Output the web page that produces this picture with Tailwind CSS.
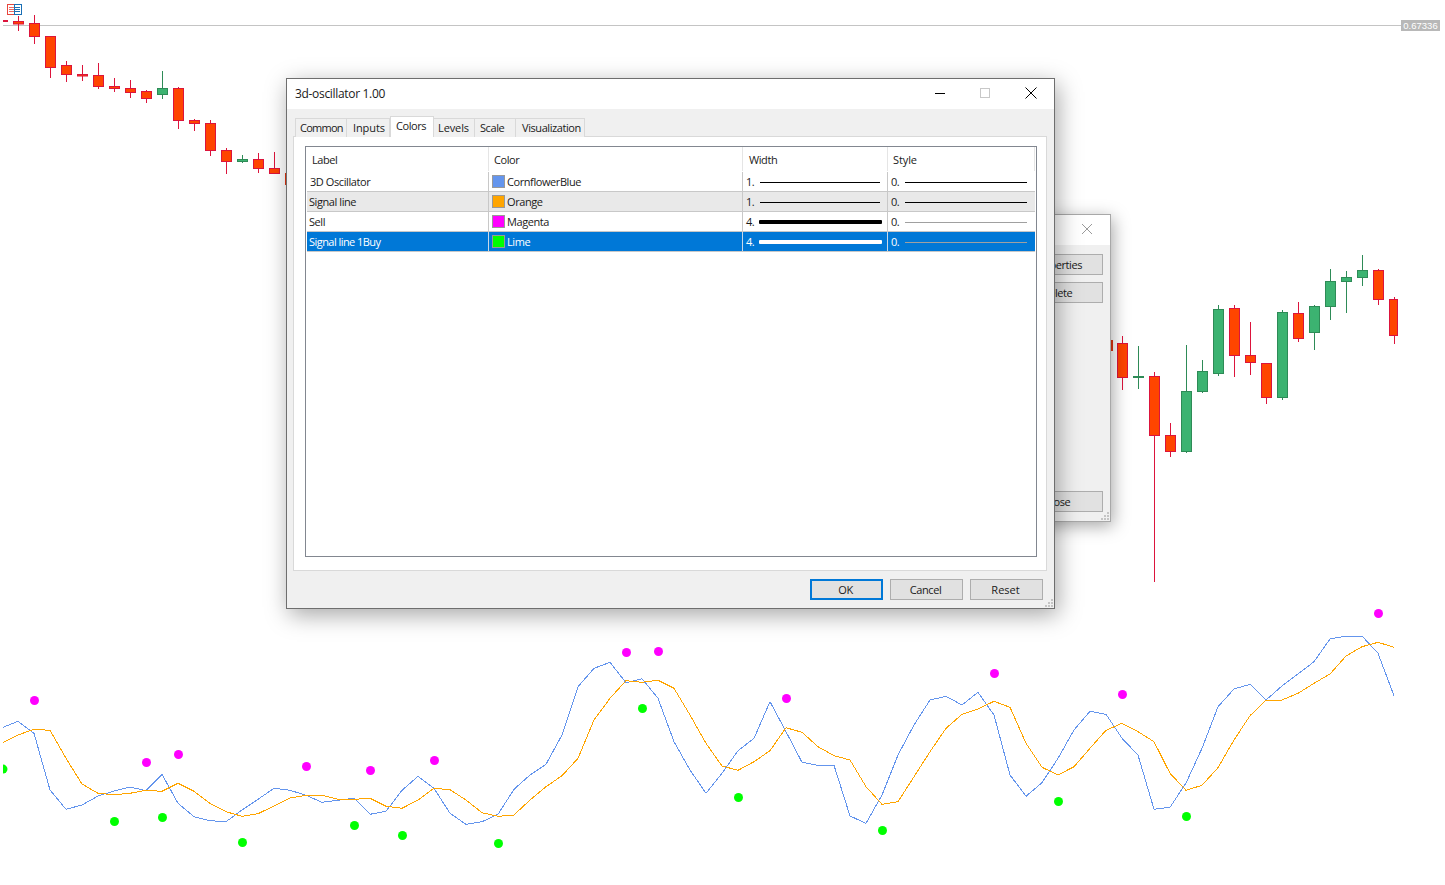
<!DOCTYPE html>
<html>
<head>
<meta charset="utf-8">
<script src="https://cdn.jsdelivr.net/npm/@tailwindcss/browser@4"></script>
</head>
<body class="bg-white">
<div class="relative w-[1445px] h-[885px] overflow-hidden bg-white font-['Open_Sans','Noto_Sans',sans-serif] text-[11px] tracking-[-0.42px] text-[#1a1a1a]">

  <!-- chart canvas -->
  <svg class="absolute left-0 top-0" width="1445" height="885" viewBox="0 0 1445 885">
    <rect x="3" y="25" width="1398" height="1" fill="#c4c4c4"/>
    <path fill="none" stroke="#dc143c" stroke-width="1" d="M18.5 16V31M34.5 15V44M50.5 36V78M66.5 61V82M82.5 65V81M98.5 63V89M114.5 78V92M130.5 80V98M146.5 90V103M178.5 87V129M194.5 119V131M210.5 120V156M226.5 148V174M258.5 153V173M274.5 152V174M1122.5 336V390M1154.5 372V582M1170.5 423V457M1234.5 305V377M1250.5 322V375M1266.5 363V404M1298.5 302V342M1378.5 269V305M1394.5 297V344"/>
    <path fill="none" stroke="#2e8b57" stroke-width="1" d="M162.5 71V99M242.5 155V163M1138.5 346V389M1186.5 345V453M1202.5 360V393M1218.5 305V376M1282.5 310V400M1314.5 305V350M1330.5 269V320M1346.5 271V313M1362.5 255V286"/>
    <rect x="3" y="20" width="5" height="2" fill="#dc143c"/>
    <rect x="285" y="173" width="2" height="12" fill="#e03510"/>
    <rect x="1109" y="340" width="4" height="11" fill="#e03510"/>
    <g fill="#ff4500" stroke="#dc143c" stroke-width="1">
      <rect x="13.5" y="21.5" width="10" height="2.5"/>
      <rect x="29.5" y="23.5" width="10" height="13"/>
      <rect x="45.5" y="36.5" width="10" height="31"/>
      <rect x="61.5" y="65.5" width="10" height="9"/>
      <rect x="77.5" y="74.5" width="10" height="1.5"/>
      <rect x="93.5" y="75.5" width="10" height="11"/>
      <rect x="109.5" y="86.5" width="10" height="2"/>
      <rect x="125.5" y="88.5" width="10" height="4"/>
      <rect x="141.5" y="91.5" width="10" height="7"/>
      <rect x="173.5" y="88.5" width="10" height="32"/>
      <rect x="189.5" y="120.5" width="10" height="3"/>
      <rect x="205.5" y="123.5" width="10" height="27"/>
      <rect x="221.5" y="150.5" width="10" height="11"/>
      <rect x="253.5" y="159.5" width="10" height="9"/>
      <rect x="269.5" y="168.5" width="10" height="5"/>
      <rect x="1117.5" y="343.5" width="10" height="34"/>
      <rect x="1149.5" y="376.5" width="10" height="59"/>
      <rect x="1165.5" y="435.5" width="10" height="16"/>
      <rect x="1229.5" y="308.5" width="10" height="47"/>
      <rect x="1245.5" y="355.5" width="10" height="7"/>
      <rect x="1261.5" y="363.5" width="10" height="34"/>
      <rect x="1293.5" y="313.5" width="10" height="25"/>
      <rect x="1373.5" y="270.5" width="10" height="29"/>
      <rect x="1389.5" y="299.5" width="8" height="36"/>
    </g>
    <g fill="#3cb371" stroke="#2e8b57" stroke-width="1">
      <rect x="157.5" y="88.5" width="10" height="6"/>
      <rect x="237.5" y="159.5" width="10" height="2"/>
      <rect x="1133.5" y="376.5" width="10" height="1"/>
      <rect x="1181.5" y="391.5" width="10" height="60"/>
      <rect x="1197.5" y="371.5" width="10" height="20"/>
      <rect x="1213.5" y="309.5" width="10" height="64"/>
      <rect x="1277.5" y="312.5" width="10" height="85"/>
      <rect x="1309.5" y="306.5" width="10" height="26"/>
      <rect x="1325.5" y="281.5" width="10" height="25"/>
      <rect x="1341.5" y="277.5" width="10" height="4"/>
      <rect x="1357.5" y="270.5" width="10" height="7"/>
    </g>

    <polyline fill="none" stroke="#6495ed" stroke-width="1" shape-rendering="crispEdges" points="3,727.3 18,721.3 34,733.3 50,790 66,809.3 82,805 98,796 114,791 130,787 146,790.7 162,774.3 178,803.3 194,816.7 210,820.7 226,821.7 242,810 258,799.3 274,788.3 290,790.3 306,795.3 322,802.3 338,800.3 354,798.3 370,814.3 386,811.3 402,790.3 418,776.3 434,788.3 450,813.3 466,824.3 482,821.7 498,814.3 514,789.3 530,775 546,764.3 562,735 578,686.7 594,668.3 610,662.3 626,682.7 642,678.7 658,698.3 674,741.7 690,770 706,793.3 722,773.3 738,750.7 754,738.3 770,701.7 786,731.7 802,762.3 818,765.3 834,765.3 850,816 866,823.3 882,795 898,755 914,725 930,700 946,696.3 962,705 978,692.3 994,715 1010,775 1026,796.3 1042,782.7 1058,758.3 1074,730 1090,711.3 1106,714.3 1122,738.3 1138,755 1154,809.3 1170,807.3 1186,783 1202,748.3 1218,706.7 1234,689 1250,684.3 1266,700 1282,686 1298,674 1314,661.7 1330,639 1346,636 1362,636 1378,653.3 1394,695.7"/>
    <polyline fill="none" stroke="#ffa500" stroke-width="1" shape-rendering="crispEdges" points="3,742.7 18,735 34,729.3 50,730.3 66,758.3 82,784 98,793.3 114,794.7 130,793.3 146,790.3 162,791.3 178,783.3 194,791.3 210,803.3 226,811.7 242,816.3 258,813.7 274,806 290,798 306,795.3 322,795.3 338,799.3 354,799.3 370,798.3 386,806.3 402,808.3 418,800 434,788.3 450,789.7 466,800 482,812.7 498,816.3 514,815 530,800 546,786.7 562,775.7 578,758.3 594,720 610,698.3 626,680.7 642,682.3 658,680.3 674,688.3 690,715 706,743.3 722,766 738,770.3 754,761.7 770,750.7 786,727.7 802,732.3 818,746.7 834,755.7 850,760 866,786.7 882,804.3 898,801.7 914,776.7 930,751.7 946,728.3 962,714.3 978,709 994,701.3 1010,707.3 1026,743.3 1042,767.3 1058,775 1074,766.7 1090,748.3 1106,730.3 1122,723.3 1138,731.7 1154,741.7 1170,773.3 1186,790.3 1202,785.3 1218,767.7 1234,740 1250,715.7 1266,700 1282,700 1298,693.3 1314,683.3 1330,674 1346,656 1362,646.7 1378,642.3 1394,647.3"/>

    <g fill="#ff00ff">
      <circle cx="34.5" cy="700.5" r="4.5"/><circle cx="146.5" cy="762.5" r="4.5"/><circle cx="178.5" cy="754.5" r="4.5"/><circle cx="306.5" cy="766.5" r="4.5"/><circle cx="370.5" cy="770.5" r="4.5"/><circle cx="434.5" cy="760.5" r="4.5"/><circle cx="626.5" cy="652.5" r="4.5"/><circle cx="658.5" cy="651.5" r="4.5"/><circle cx="786.5" cy="698.5" r="4.5"/><circle cx="994.5" cy="673.5" r="4.5"/><circle cx="1122.5" cy="694.5" r="4.5"/><circle cx="1378.5" cy="613.5" r="4.5"/>
    </g>
    <g fill="#00ff00">
      <path d="M3 764.6a4.5 4.5 0 0 1 0 9z"/>
      <circle cx="114.5" cy="821.5" r="4.5"/><circle cx="162.5" cy="817.5" r="4.5"/><circle cx="242.5" cy="842.5" r="4.5"/><circle cx="354.5" cy="825.5" r="4.5"/><circle cx="402.5" cy="835.5" r="4.5"/><circle cx="498.5" cy="843.5" r="4.5"/><circle cx="642.5" cy="708.5" r="4.5"/><circle cx="738.5" cy="797.5" r="4.5"/><circle cx="882.5" cy="830.5" r="4.5"/><circle cx="1058.5" cy="801.5" r="4.5"/><circle cx="1186.5" cy="816.5" r="4.5"/>
    </g>

    <rect x="7.5" y="4.5" width="7" height="10" fill="#fff" stroke="#e8453c"/>
    <rect x="14.5" y="4.5" width="7" height="10" fill="#fff" stroke="#1a6fb5"/>
    <path stroke="#e8453c" d="M9 7.5h5M9 9.5h5M9 11.5h5" fill="none" opacity=".8"/>
    <path stroke="#1a6fb5" d="M15 7.5h5M15 9.5h5M15 11.5h5" fill="none"/>
  </svg>

  <!-- price label -->
  <div class="absolute left-[1401px] top-[20px] w-[39px] h-[11px] bg-[#b8b8b8] text-white text-[9.5px] leading-[11px] tracking-[0px] text-center font-['Liberation_Sans',sans-serif]">0.67336</div>

  <!-- back window -->
  <div class="absolute left-[900px] top-[214px] w-[211px] h-[308px] border border-[#a8a8a8] bg-[#f0f0f0] flex flex-col shadow-[2px_4px_16px_rgba(0,0,0,0.35)]">
    <div class="h-[30px] bg-white flex items-center justify-end pr-[17px] pb-[2px] shrink-0">
      <svg width="12" height="12" viewBox="0 0 12 12"><path d="M1 1l10 10M11 1L1 11" stroke="#9a9a9a" fill="none"/></svg>
    </div>
    <div class="flex-1 flex flex-col items-end pr-[7px] pt-[9px] pb-[9px]">
      <div class="w-[94px] h-[21px] border border-[#adadad] bg-[#e1e1e1] flex items-center justify-center pt-[1px] pl-[3px]">Properties</div>
      <div class="w-[94px] h-[21px] mt-[7px] border border-[#adadad] bg-[#e1e1e1] flex items-center justify-center pt-[1px] pl-[2px]">Delete</div>
      <div class="w-[94px] h-[21px] mt-auto border border-[#adadad] bg-[#e1e1e1] flex items-center justify-center pt-[1px] pl-[3px]">Close</div>
    </div>
    <svg class="absolute right-[1px] bottom-[1px]" width="8" height="8" viewBox="0 0 8 8" fill="#c4c4c4"><rect x="6" y="0" width="2" height="2"/><rect x="3" y="3" width="2" height="2"/><rect x="6" y="3" width="2" height="2"/><rect x="0" y="6" width="2" height="2"/><rect x="3" y="6" width="2" height="2"/><rect x="6" y="6" width="2" height="2"/></svg>
  </div>

  <!-- main dialog -->
  <div class="absolute left-[286px] top-[78px] w-[769px] h-[531px] border border-[#6e6e6e] bg-[#f0f0f0] flex flex-col shadow-[3px_6px_22px_rgba(0,0,0,0.35)]">
    <div class="h-[30px] shrink-0 bg-white flex items-center justify-between pl-[8px] pr-[17px]">
      <span class="text-[12px] tracking-[-0.32px]">3d-oscillator 1.00</span>
      <div class="flex items-center pb-[2px]">
        <svg class="mr-[33px]" width="12" height="12" viewBox="0 0 12 12"><path d="M1 6.5h10" stroke="#000" fill="none"/></svg>
        <svg class="mr-[34px]" width="12" height="12" viewBox="0 0 12 12"><rect x="1.5" y="1.5" width="9" height="9" stroke="#c8c8c8" fill="none"/></svg>
        <svg width="12" height="12" viewBox="0 0 12 12"><path d="M.5.5l11 11M11.5.5l-11 11" stroke="#000" fill="none"/></svg>
      </div>
    </div>

    <div class="flex-1 flex flex-col pl-[6px] pr-[7px] pt-[7px] min-h-0">
      <div class="flex items-end h-[21px] pl-[2px] shrink-0 relative z-10 -mb-[1px]">
        <div class="w-[52px] h-[19px] border border-[#d9d9d9] border-b-0 bg-[#f0f0f0] flex items-center pl-[4px] pt-[1px] tracking-[-0.75px]">Common</div>
        <div class="w-[43px] h-[19px] border-t border-r border-[#d9d9d9] bg-[#f0f0f0] flex items-center pl-[6px] pt-[1px] tracking-[-0.1px]">Inputs</div>
        <div class="w-[44px] h-[21px] border border-[#d9d9d9] border-b-0 bg-white flex items-center pb-[1px] pl-[5px]">Colors</div>
        <div class="w-[41px] h-[19px] border-t border-r border-[#d9d9d9] bg-[#f0f0f0] flex items-center pl-[4px] pt-[1px] tracking-[-0.1px]">Levels</div>
        <div class="w-[41px] h-[19px] border-t border-r border-[#d9d9d9] bg-[#f0f0f0] flex items-center pl-[5px] pt-[1px]">Scale</div>
        <div class="w-[69px] h-[19px] border-t border-r border-[#d9d9d9] bg-[#f0f0f0] flex items-center pl-[6px] pt-[1px]">Visualization</div>
      </div>
      <div class="h-[435px] shrink-0 border border-[#d9d9d9] bg-white pl-[11px] pr-[9px] pt-[9px] pb-[13px]">
        <div class="h-full border border-[#828790] bg-white">
          <div class="grid grid-cols-[183px_254px_145px_147px] h-[25px] pb-[1px]">
            <div class="border-r border-[#e5e5e5] pl-[6px] flex items-center pt-[3px]">Label</div>
            <div class="border-r border-[#e5e5e5] pl-[5px] flex items-center pt-[3px]">Color</div>
            <div class="border-r border-[#e5e5e5] pl-[6px] flex items-center pt-[3px]">Width</div>
            <div class="border-r border-[#e5e5e5] pl-[5px] flex items-center pt-[3px] tracking-[-0.1px]">Style</div>
          </div>

          <div class="grid grid-cols-[182px_254px_145px_147px] ml-[1px] w-[728px] h-[20px] border-b border-[#c8c8c8]">
            <div class="border-r border-[#c8c8c8] pl-[3px] flex items-center pt-[1px]">3D Oscillator</div>
            <div class="border-r border-[#c8c8c8] pl-[3px] flex items-center pt-[1px]"><span class="w-[13px] h-[13px] -mt-[1px] border border-[#999] bg-[#6495ed] mr-[2px]"></span>CornflowerBlue</div>
            <div class="border-r border-[#c8c8c8] pl-[3px] flex items-center pt-[1px]"><span class="w-[14px]">1.</span><span class="w-[120px] h-[1px] bg-black"></span></div>
            <div class="pl-[3px] flex items-center pt-[1px]"><span class="w-[14px]">0.</span><span class="w-[122px] h-[1px] bg-black"></span></div>
          </div>
          <div class="grid grid-cols-[182px_254px_145px_147px] ml-[1px] w-[728px] h-[20px] border-b border-[#c8c8c8] bg-[#e9e9e9]">
            <div class="border-r border-[#c8c8c8] pl-[2px] flex items-center pt-[1px]">Signal line</div>
            <div class="border-r border-[#c8c8c8] pl-[3px] flex items-center pt-[1px]"><span class="w-[13px] h-[13px] -mt-[1px] border border-[#999] bg-[#ffa500] mr-[2px]"></span>Orange</div>
            <div class="border-r border-[#c8c8c8] pl-[3px] flex items-center pt-[1px]"><span class="w-[14px]">1.</span><span class="w-[120px] h-[1px] bg-black"></span></div>
            <div class="pl-[3px] flex items-center pt-[1px]"><span class="w-[14px]">0.</span><span class="w-[122px] h-[1px] bg-black"></span></div>
          </div>
          <div class="grid grid-cols-[182px_254px_145px_147px] ml-[1px] w-[728px] h-[20px] border-b border-[#c8c8c8]">
            <div class="border-r border-[#c8c8c8] pl-[2px] flex items-center pt-[1px]">Sell</div>
            <div class="border-r border-[#c8c8c8] pl-[3px] flex items-center pt-[1px]"><span class="w-[13px] h-[13px] -mt-[1px] border border-[#999] bg-[#ff00ff] mr-[2px]"></span>Magenta</div>
            <div class="border-r border-[#c8c8c8] pl-[3px] flex items-center pt-[1px]"><span class="w-[13px]">4.</span><span class="w-[123px] h-[4px] bg-black rounded-[1px]"></span></div>
            <div class="pl-[3px] flex items-center pt-[1px]"><span class="w-[14px]">0.</span><span class="w-[122px] h-[1px] bg-[#a0a0a0]"></span></div>
          </div>
          <div class="grid grid-cols-[182px_254px_145px_147px] ml-[1px] w-[728px] h-[20px] border-b border-[#c8c8c8] bg-[#0078d7] text-white">
            <div class="border-r border-[#c8d8e8] pl-[2px] flex items-center pt-[1px] tracking-[-0.55px]">Signal line 1Buy</div>
            <div class="border-r border-[#c8d8e8] pl-[3px] flex items-center pt-[1px]"><span class="w-[13px] h-[13px] -mt-[1px] border border-[#999] bg-[#00ff00] mr-[2px]"></span>Lime</div>
            <div class="border-r border-[#c8d8e8] pl-[3px] flex items-center pt-[1px]"><span class="w-[13px]">4.</span><span class="w-[123px] h-[4px] bg-white rounded-[1px]"></span></div>
            <div class="pl-[3px] flex items-center pt-[1px]"><span class="w-[14px]">0.</span><span class="w-[122px] h-[1px] bg-[#a0a0a0]"></span></div>
          </div>
        </div>
      </div>
      <div class="flex justify-end gap-[7px] pr-[4px] pt-[8px]">
        <div class="w-[73px] h-[21px] border-2 border-[#0078d7] bg-[#e1e1e1] flex items-center justify-center pt-[1px] pr-[2px]">OK</div>
        <div class="w-[73px] h-[21px] border border-[#adadad] bg-[#e1e1e1] flex items-center justify-center pt-[1px] pr-[2px]">Cancel</div>
        <div class="w-[73px] h-[21px] border border-[#adadad] bg-[#e1e1e1] flex items-center justify-center pt-[1px] pr-[2px] tracking-[0px]">Reset</div>
      </div>
    </div>
    <svg class="absolute right-[1px] bottom-[1px]" width="8" height="8" viewBox="0 0 8 8" fill="#c4c4c4"><rect x="6" y="0" width="2" height="2"/><rect x="3" y="3" width="2" height="2"/><rect x="6" y="3" width="2" height="2"/><rect x="0" y="6" width="2" height="2"/><rect x="3" y="6" width="2" height="2"/><rect x="6" y="6" width="2" height="2"/></svg>
  </div>
</div>
</body>
</html>
